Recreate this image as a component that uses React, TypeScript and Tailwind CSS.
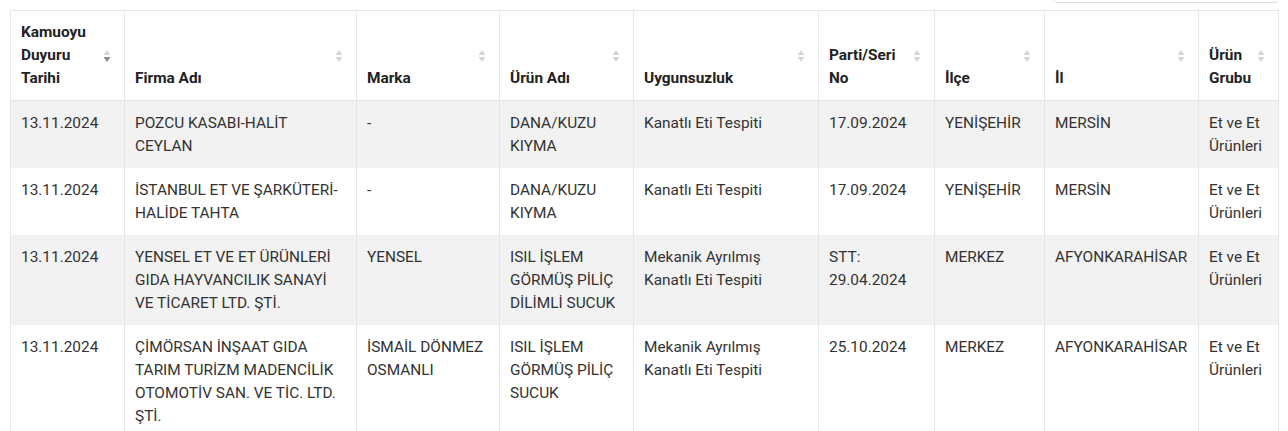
import React from "react";

type Row = string[];

const headers: { label: string; active?: boolean }[] = [
  { label: "Kamuoyu Duyuru Tarihi", active: true },
  { label: "Firma Adı" },
  { label: "Marka" },
  { label: "Ürün Adı" },
  { label: "Uygunsuzluk" },
  { label: "Parti/Seri No" },
  { label: "İlçe" },
  { label: "İl" },
  { label: "Ürün Grubu" },
];

const widths = [114, 232, 143, 134, 185, 116, 110, 154, 80];

const rows: Row[] = [
  ["13.11.2024", "POZCU KASABI-HALİT CEYLAN", "-", "DANA/KUZU KIYMA", "Kanatlı Eti Tespiti", "17.09.2024", "YENİŞEHİR", "MERSİN", "Et ve Et Ürünleri"],
  ["13.11.2024", "İSTANBUL ET VE ŞARKÜTERİ-HALİDE TAHTA", "-", "DANA/KUZU KIYMA", "Kanatlı Eti Tespiti", "17.09.2024", "YENİŞEHİR", "MERSİN", "Et ve Et Ürünleri"],
  ["13.11.2024", "YENSEL ET VE ET ÜRÜNLERİ GIDA HAYVANCILIK SANAYİ VE TİCARET LTD. ŞTİ.", "YENSEL", "ISIL İŞLEM GÖRMÜŞ PİLİÇ DİLİMLİ SUCUK", "Mekanik Ayrılmış Kanatlı Eti Tespiti", "STT: 29.04.2024", "MERKEZ", "AFYONKARAHİSAR", "Et ve Et Ürünleri"],
  ["13.11.2024", "ÇİMÖRSAN İNŞAAT GIDA TARIM TURİZM MADENCİLİK OTOMOTİV SAN. VE TİC. LTD. ŞTİ.", "İSMAİL DÖNMEZ OSMANLI", "ISIL İŞLEM GÖRMÜŞ PİLİÇ SUCUK", "Mekanik Ayrılmış Kanatlı Eti Tespiti", "25.10.2024", "MERKEZ", "AFYONKARAHİSAR", "Et ve Et Ürünleri"],
];

function SortIcon({ active }: { active?: boolean }) {
  return (
    <svg width="8" height="14" viewBox="0 0 8 14" className="absolute right-[13px] top-1/2 -translate-y-1/2">
      <path d="M4 1 L7.5 6 L0.5 6 Z" fill="#d6d6d6" />
      <path d="M4 13 L7.5 8 L0.5 8 Z" fill={active ? "#8a8a8a" : "#d6d6d6"} />
    </svg>
  );
}

export default function App() {
  return (
    <div className="w-[1288px] h-[431px] overflow-hidden bg-white px-[10px]" style={{ fontFamily: "Roboto, 'Noto Sans', sans-serif" }}>
      <div className="flex h-[3px] items-end justify-end overflow-hidden">
        <div className="mr-[-2px] h-[30px] w-[228px] shrink-0 rounded-[5px] border border-[#dcdcdc] bg-white" />
      </div>
      <table className="mt-[7px] w-[1268px] table-fixed border-collapse text-[15.4px] leading-[23px]">
        <colgroup>
          {widths.map((w, i) => (
            <col key={i} style={{ width: w }} />
          ))}
        </colgroup>
        <thead>
          <tr className="bg-white">
            {headers.map((h, i) => (
              <th
                key={i}
                className="relative border border-[#e6e6e6] py-[10px] pl-[10px] pr-[30px] text-left align-bottom font-bold text-[#222]"
              >
                {h.label}
                <SortIcon active={h.active} />
              </th>
            ))}
          </tr>
        </thead>
        <tbody>
          {rows.map((r, ri) => (
            <tr key={ri} className={ri % 2 === 0 ? "bg-[#f2f2f2]" : "bg-white"}>
              {r.map((c, ci) => (
                <td
                  key={ci}
                  className="border-x border-[#e6e6e6] pt-[11px] pb-[10px] px-[10px] align-top text-[#333]"
                >
                  {c}
                </td>
              ))}
            </tr>
          ))}
        </tbody>
      </table>
    </div>
  );
}
